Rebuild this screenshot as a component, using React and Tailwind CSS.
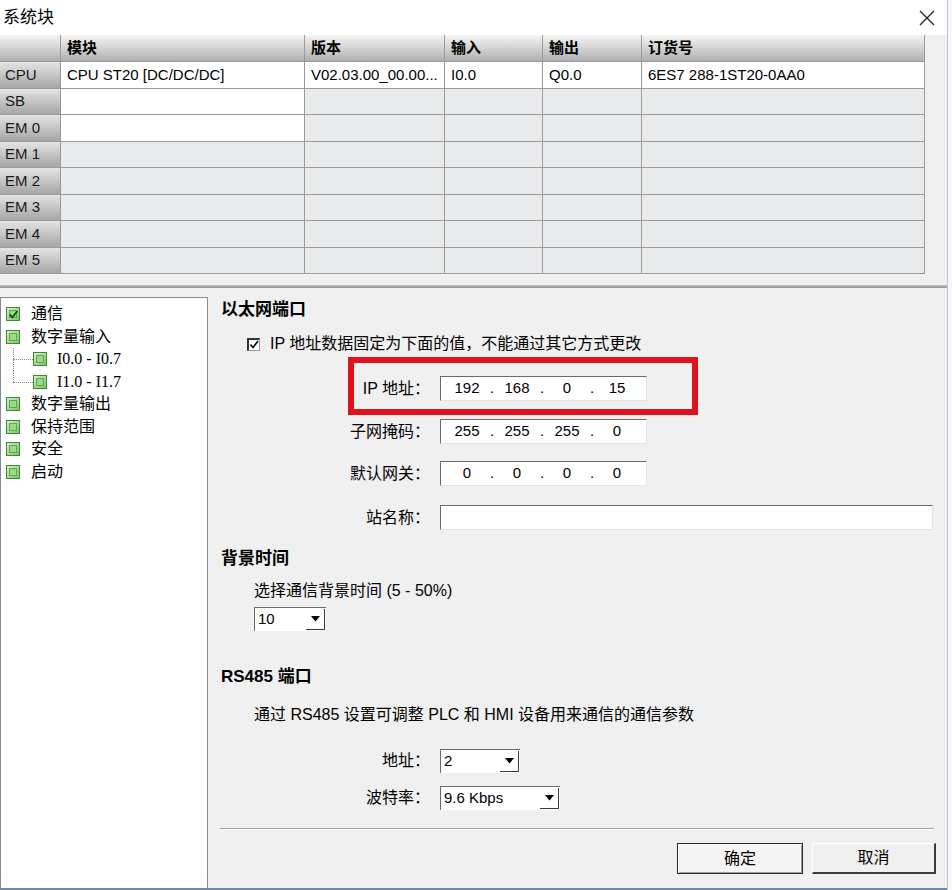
import React from "react";

const cols = ["模块", "版本", "输入", "输出", "订货号"];
const rows = ["CPU", "SB", "EM 0", "EM 1", "EM 2", "EM 3", "EM 4", "EM 5"];
const cpu = ["CPU ST20 [DC/DC/DC]", "V02.03.00_00.00...", "I0.0", "Q0.0", "6ES7 288-1ST20-0AA0"];

function TreeBox({ checked }) {
  return (
    <span className="relative flex h-[14px] w-[14px] shrink-0 items-center justify-center border border-[#3f8a30] bg-gradient-to-br from-[#d4f2c6] to-[#78c466]">
      <span className="h-[8px] w-[8px] border border-[#5fa84f] bg-[#9bd889]" />
      {checked && (
        <svg className="absolute left-[1px] top-[1px]" width="11" height="11" viewBox="0 0 11 11">
          <path d="M1.5 5.5 L4.3 8.3 L9.5 2" stroke="#1d4d14" strokeWidth="1.8" fill="none" />
        </svg>
      )}
    </span>
  );
}

function TreeItem({ label, checked, child, last, serif }) {
  return (
    <div className="relative flex h-[22.5px] items-center">
      {child && (
        <>
          <span className="absolute left-[12px] top-0 h-[11px] border-l border-dotted border-[#888]" />
          {!last && <span className="absolute left-[12px] top-[11px] h-[12px] border-l border-dotted border-[#888]" />}
          <span className="absolute left-[12px] top-[11px] w-[20px] border-t border-dotted border-[#888]" />
        </>
      )}
      <span className={child ? "ml-[32px]" : "ml-[5px]"}>
        <TreeBox checked={checked} />
      </span>
      <span className={serif ? "ml-[10px] font-['Liberation_Serif',serif] text-[16px]" : "ml-[11px] text-[16px]"}>{label}</span>
    </div>
  );
}

function IpField({ parts }) {
  return (
    <div className="flex h-[25px] w-[207px] items-center border-l border-t border-b border-r border-l-[#6a6a6a] border-t-[#6a6a6a] border-b-[#e4e4e4] border-r-[#e4e4e4] bg-white pl-[4px] text-[15px]">
      {parts.map((p, i) => (
        <React.Fragment key={i}>
          <span className="w-[44px] text-center">{p}</span>
          {i < 3 && <span className="w-[6px] text-center">.</span>}
        </React.Fragment>
      ))}
    </div>
  );
}

function Label({ children }) {
  return <div className="w-[232px] pr-[10px] text-right text-[16px]">{children}</div>;
}

function Dropdown({ value, w }) {
  return (
    <div className={`flex h-[24px] ${w} items-stretch border-l border-t border-l-[#6a6a6a] border-t-[#6a6a6a] bg-white`}>
      <span className="flex flex-1 items-center pl-[3px] text-[15px]">{value}</span>
      <span className="my-[1px] mr-[1px] flex w-[19px] items-center justify-center border-b border-r border-b-[#3a3a3a] border-r-[#3a3a3a] bg-white">
        <svg width="9" height="6" viewBox="0 0 9 6">
          <path d="M0 0 H9 L4.5 5.5 Z" fill="#000" />
        </svg>
      </span>
    </div>
  );
}

export default function App() {
  return (
    <div className="flex h-[890px] w-[952px] overflow-hidden bg-[#f0f0f0] font-['Liberation_Sans','Noto_Sans_CJK_SC',sans-serif] text-black">
      <div className="flex w-[947px] flex-col border-b-2 border-[#6f8aa3]">
        {/* title */}
        <div className="flex h-[35px] items-center justify-between bg-white pl-[3px] pr-[12px]">
          <span className="text-[17px]">系统块</span>
          <svg width="16" height="16" viewBox="0 0 16 16">
            <path d="M1 1 L15 15 M15 1 L1 15" stroke="#222" strokeWidth="1.3" />
          </svg>
        </div>

        {/* table */}
        <div className="h-[250px] bg-[#f0f0f0]">
          <div className="grid w-[925px] grid-cols-[61px_244px_140px_98px_99px_283px]">
            <div className="h-[27px] border-b border-r border-[#9a9a9a] bg-gradient-to-b from-[#f6f6f6] to-[#b0b0b0]" />
            {cols.map((c) => (
              <div key={c} className="flex h-[27px] items-center border-b border-r border-[#9a9a9a] bg-gradient-to-b from-[#f6f6f6] to-[#b0b0b0] pl-[6px] text-[15px] font-bold">
                {c}
              </div>
            ))}
            {rows.map((r, ri) => (
              <React.Fragment key={r}>
                <div className="flex h-[26.5px] items-center border-b border-r border-[#9a9a9a] bg-gradient-to-b from-[#e4e4e4] to-[#a6a6a6] pl-[5px] text-[15px] font-medium text-[#1a1a1a]">
                  {r}
                </div>
                {cols.map((c, ci) => {
                  const white = ri === 0 || (ci === 0 && ri < 3);
                  return (
                    <div
                      key={c}
                      className={`flex h-[26.5px] items-center overflow-hidden whitespace-nowrap border-b border-r border-[#9a9a9a] pl-[6px] text-[15px] ${white ? "bg-white" : "bg-[#e9eaec]"}`}
                    >
                      {ri === 0 ? cpu[ci] : ""}
                    </div>
                  );
                })}
              </React.Fragment>
            ))}
          </div>
        </div>
        <div className="h-[3px] bg-gradient-to-b from-[#c8c8c8] to-[#909090]" />

        {/* bottom */}
        <div className="flex flex-1">
          <div className="mt-[9px] w-[208px] border-l border-r border-t border-[#7d8b99] bg-white pt-[5px]">
            <TreeItem label="通信" checked />
            <TreeItem label="数字量输入" />
            <TreeItem label="I0.0 - I0.7" child serif />
            <TreeItem label="I1.0 - I1.7" child last serif />
            <TreeItem label="数字量输出" />
            <TreeItem label="保持范围" />
            <TreeItem label="安全" />
            <TreeItem label="启动" />
          </div>

          <div className="flex flex-1 flex-col">
            <div className="ml-[13px] mt-[12px] flex h-[20px] items-center text-[17px] font-bold">以太网端口</div>

            <div className="ml-[39px] mt-[14px] flex h-[20px] items-center">
              <span className="relative h-[13px] w-[13px] border-l-2 border-t-2 border-b border-r border-l-[#333] border-t-[#333] border-b-[#999] border-r-[#999] bg-white">
                <svg className="absolute left-[0px] top-[0px]" width="10" height="10" viewBox="0 0 10 10">
                  <path d="M1.5 4.5 L4 7.5 L9 1" stroke="#000" strokeWidth="1.6" fill="none" />
                </svg>
              </span>
              <span className="ml-[10px] text-[16px]">IP 地址数据固定为下面的值，不能通过其它方式更改</span>
            </div>

            <div className="relative mt-[22px] flex items-center">
              <Label>IP 地址：</Label>
              <IpField parts={["192", "168", "0", "15"]} />
              <div className="absolute left-[140px] top-[-19px] h-[58px] w-[350px] border-[6px] border-[#e0121c]" />
            </div>

            <div className="mt-[18px] flex items-center">
              <Label>子网掩码：</Label>
              <IpField parts={["255", "255", "255", "0"]} />
            </div>

            <div className="mt-[17px] flex items-center">
              <Label>默认网关：</Label>
              <IpField parts={["0", "0", "0", "0"]} />
            </div>

            <div className="mt-[19px] flex items-center">
              <Label>站名称：</Label>
              <div className="h-[25px] w-[493px] border-l border-t border-b border-r border-l-[#6a6a6a] border-t-[#6a6a6a] border-b-[#e4e4e4] border-r-[#e4e4e4] bg-white" />
            </div>

            <div className="ml-[13px] mt-[19px] flex h-[20px] items-center text-[17px] font-bold">背景时间</div>
            <div className="ml-[46px] mt-[12px] flex h-[20px] items-center text-[16px]">选择通信背景时间 (5 - 50%)</div>
            <div className="ml-[46px] mt-[6px]">
              <Dropdown value="10" w="w-[72px]" />
            </div>

            <div className="ml-[13px] mt-[36px] flex h-[20px] items-center text-[17px] font-bold">RS485 端口</div>
            <div className="ml-[46px] mt-[18px] flex h-[20px] items-center text-[16px]">
              通过 RS485 设置可调整 PLC 和 HMI 设备用来通信的通信参数
            </div>

            <div className="mt-[24px] flex items-center">
              <Label>地址：</Label>
              <Dropdown value="2" w="w-[80px]" />
            </div>
            <div className="mt-[13px] flex items-center">
              <Label>波特率：</Label>
              <Dropdown value="9.6 Kbps" w="w-[120px]" />
            </div>

            <div className="ml-[12px] mr-[13px] mt-[18px] h-[2px] border-t border-b border-t-[#a0a0a0] border-b-white" />

            <div className="mt-[13px] flex justify-end gap-[9px] pr-[11px]">
              <button className="flex h-[31px] w-[126px] items-center justify-center border border-[#2a2a2a] bg-[#f4f4f4] text-[16px] shadow-[inset_1px_1px_0_#ffffff,inset_-1px_-1px_0_#a0a0a0]">
                确定
              </button>
              <button className="flex h-[31px] w-[124px] items-center justify-center border-b-2 border-r-2 border-l border-t border-b-[#3a3a3a] border-r-[#3a3a3a] border-l-white border-t-white bg-[#f0f0f0] text-[16px]">
                取消
              </button>
            </div>
          </div>
        </div>
      </div>
      <div className="flex-1 border-l border-[#c4c8cc] bg-[#f6f7f9]" />
    </div>
  );
}
